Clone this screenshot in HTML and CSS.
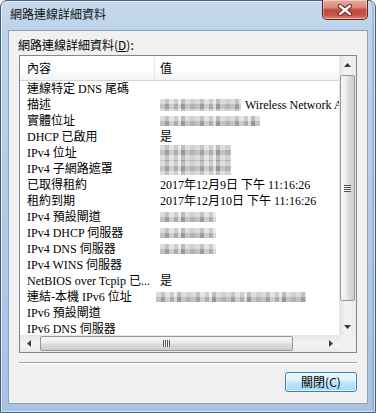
FILE: index.html
```html
<!DOCTYPE html>
<html lang="zh-Hant">
<head>
  <meta charset="UTF-8">
  <title>網路連線詳細資料</title>
  <link rel="stylesheet" href="styles.css">
</head>
<body>
  <div class="window">
    <div class="titlebar">
      <span class="title">網路連線詳細資料</span>
      <div class="close-btn">
        <svg width="16" height="12" viewBox="0 0 16 12">
          <path d="M3 2 L13 10 M13 2 L3 10" stroke="#6b1f18" stroke-width="4.4" stroke-linecap="round"/>
          <path d="M3 2 L13 10 M13 2 L3 10" stroke="#fff" stroke-width="2.4" stroke-linecap="round"/>
        </svg>
      </div>
    </div>
    <div class="client">
      <div class="label">網路連線詳細資料(<u>D</u>):</div>
      <div class="listbox">
        <div class="viewport">
          <div class="lv-header">
            <div class="col col-prop">內容</div>
            <div class="col col-val">值</div>
          </div>
          <div class="row"><span class="prop">連線特定 DNS 尾碼</span><span class="val"></span></div>
          <div class="row"><span class="prop">描述</span><span class="val"><i class="blur w-desc"></i>Wireless Network Adapter</span></div>
          <div class="row"><span class="prop">實體位址</span><span class="val"><i class="blur w-mac"></i></span></div>
          <div class="row"><span class="prop">DHCP 已啟用</span><span class="val">是</span></div>
          <div class="row"><span class="prop">IPv4 位址</span><span class="val"><i class="blur w-ip"></i></span></div>
          <div class="row"><span class="prop">IPv4 子網路遮罩</span><span class="val top"><i class="blur w-mask"></i></span></div>
          <div class="row"><span class="prop">已取得租約</span><span class="val">2017年12月9日 下午 11:16:26</span></div>
          <div class="row"><span class="prop">租約到期</span><span class="val">2017年12月10日 下午 11:16:26</span></div>
          <div class="row"><span class="prop">IPv4 預設閘道</span><span class="val"><i class="blur w-gw"></i></span></div>
          <div class="row"><span class="prop">IPv4 DHCP 伺服器</span><span class="val"><i class="blur w-gw"></i></span></div>
          <div class="row"><span class="prop">IPv4 DNS 伺服器</span><span class="val"><i class="blur w-gw"></i></span></div>
          <div class="row"><span class="prop">IPv4 WINS 伺服器</span><span class="val"></span></div>
          <div class="row"><span class="prop">NetBIOS over Tcpip 已...</span><span class="val">是</span></div>
          <div class="row"><span class="prop">連結-本機 IPv6 位址</span><span class="val"><i class="blur w-v6"></i></span></div>
          <div class="row"><span class="prop">IPv6 預設閘道</span><span class="val"></span></div>
          <div class="row"><span class="prop">IPv6 DNS 伺服器</span><span class="val"></span></div>
        </div>
        <div class="vscroll">
          <div class="arrow"><svg width="7" height="4" viewBox="0 0 7 4"><path d="M0 4 L3.5 0 L7 4Z" fill="#3b3b3b"/></svg></div>
          <div class="vthumb"><span class="grip-h"></span></div>
          <div class="arrow arrow-end"><svg width="7" height="4" viewBox="0 0 7 4"><path d="M0 0 L7 0 L3.5 4Z" fill="#3b3b3b"/></svg></div>
        </div>
        <div class="hscroll">
          <div class="arrow"><svg width="4" height="7" viewBox="0 0 4 7"><path d="M4 0 L4 7 L0 3.5Z" fill="#3b3b3b"/></svg></div>
          <div class="hthumb"><span class="grip-v"></span></div>
          <div class="arrow arrow-end"><svg width="4" height="7" viewBox="0 0 4 7"><path d="M0 0 L4 3.5 L0 7Z" fill="#3b3b3b"/></svg></div>
        </div>
        <div class="corner"></div>
      </div>
      <div class="separator"></div>
      <div class="actions">
        <button class="btn">關閉(C)</button>
      </div>
    </div>
  </div>
</body>
</html>
```

FILE: styles.css
```css
:root {--client-bg: #f0f0f0;--list-border: #828790;--ui-font: "Noto Sans CJK TC", "Noto Sans", sans-serif;--list-font: "Liberation Serif", "Noto Sans CJK TC", serif;}
* { box-sizing: border-box; }
body {margin: 0;background: #fff;}
.window {width: 376px;height: 413px;display: flex;flex-direction: column;padding: 0 7px 8px;border: 1px solid #4e5e73;border-radius: 7px 7px 0 0;background: linear-gradient(180deg, #c6daef 0, #bcd3eb 30px, #b0cae7 60%, #a7c3e3 100%);box-shadow: inset 0 0 0 1px rgba(255, 255, 255, 0.55), inset -3px 0 0 rgba(120, 160, 205, 0.45);font-family: var(--ui-font);font-size: 12px;color: #000;}
.titlebar {height: 29px;flex: none;display: flex;align-items: flex-start;}
.title {padding: 5px 0 0 2px;line-height: 16px;color: #111;}
.close-btn {margin-left: auto;margin-top: -1px;width: 46px;height: 20px;display: flex;align-items: center;justify-content: center;border: 1px solid #5d231d;border-top: none;border-radius: 0 0 5px 5px;background: linear-gradient(180deg, #e6ada2 0, #d98777 40%, #c24a3c 52%, #c65444 80%, #dc8c78 100%);box-shadow: inset 0 0 0 1px rgba(255, 255, 255, 0.35);}
.client {flex: 1;display: flex;flex-direction: column;padding: 6px 10px 0;background: var(--client-bg);border: 1px solid #8b9fb7;}
.label {margin: 0 0 2px -1px;line-height: 16px;}
.listbox {height: 298px;flex: none;display: grid;grid-template-columns: 1fr 17px;grid-template-rows: 1fr 17px;background: #fff;border: 1px solid var(--list-border);}
.viewport {overflow: hidden;}
.lv-header {display: flex;height: 25px;border-bottom: 1px solid #d5d5d5;background: linear-gradient(180deg, #fff 0, #fff 55%, #f2f3f5 100%);}
.lv-header .col {line-height: 24px;}
.col-prop {width: 135px;padding-left: 7px;border-right: 1px solid #e3e8ee;}
.col-val {padding-left: 5px;flex: 1;}
.row {display: flex;height: 16px;line-height: 16px;white-space: nowrap;font-family: var(--list-font);font-size: 12px;}
.prop {width: 134px;flex: none;padding-left: 7px;overflow: hidden;}
.val {display: flex;align-items: center;gap: 4px;padding-left: 6px;}
.val.top {align-items: flex-start;}
.blur {display: inline-block;flex: none;height: 10px;background: linear-gradient(180deg, rgba(255, 255, 255, 0.3) 0 50%, rgba(0, 0, 0, 0.06) 50% 100%) 0 0 / 100% 10px, repeating-linear-gradient(90deg, #cdcdcd 0 5px, #a9a9a9 5px 9px, #dadada 9px 14px, #b8b8b8 14px 18px, #e4e4e4 18px 21px, #a0a0a0 21px 25px, #d0d0d0 25px 30px, #bdbdbd 30px 35px);}
.w-desc {width: 81px;height: 12px;}
.w-mac {width: 100px;}
.w-ip {width: 71px;height: 16px;}
.w-mask {width: 71px;height: 14px;}
.w-gw {width: 56px;}
.w-v6 {width: 150px;margin-left: -4px;}
.vscroll {display: flex;flex-direction: column;background: linear-gradient(90deg, #e4e4e4 0, #f1f1f1 35%, #f1f1f1 65%, #e9e9e9 100%);}
.hscroll {display: flex;background: linear-gradient(180deg, #e4e4e4 0, #f1f1f1 35%, #f1f1f1 65%, #e9e9e9 100%);}
.arrow {width: 17px;height: 17px;flex: none;display: flex;align-items: center;justify-content: center;}
.arrow-end {margin: auto 0 0;}
.hscroll .arrow-end {margin: 0 0 0 auto;}
.vthumb {height: 226px;margin: 2px 1px 0;display: flex;align-items: center;justify-content: center;border: 1px solid #979797;border-radius: 2px;background: linear-gradient(90deg, #f6f6f6 0, #ececec 45%, #dcdcdc 55%, #cfcfcf 100%);}
.hthumb {width: 253px;margin: 1px 0 1px 3px;display: flex;align-items: center;justify-content: center;border: 1px solid #979797;border-radius: 2px;background: linear-gradient(180deg, #f6f6f6 0, #ececec 45%, #dcdcdc 55%, #cfcfcf 100%);}
.grip-h {width: 7px;height: 7px;background: repeating-linear-gradient(180deg, #555 0 1px, #f4f4f4 1px 2px);}
.grip-v {width: 7px;height: 7px;background: repeating-linear-gradient(90deg, #555 0 1px, #f4f4f4 1px 2px);}
.corner {background: var(--client-bg);}
.separator {margin-top: 9px;height: 2px;flex: none;border-top: 1px solid #a0a0a0;border-bottom: 1px solid #fff;}
.actions {display: flex;justify-content: flex-end;margin-top: 8px;}
.btn {width: 72px;height: 20px;padding: 0;font-family: var(--ui-font);font-size: 12px;line-height: 18px;color: #000;border: 1px solid #3c7fb1;border-radius: 3px;background: linear-gradient(180deg, #eaf6fd 0, #d9f0fc 45%, #bee6fd 50%, #a7d9f5 100%);box-shadow: inset 0 0 0 1px rgba(255, 255, 255, 0.7);}
```
